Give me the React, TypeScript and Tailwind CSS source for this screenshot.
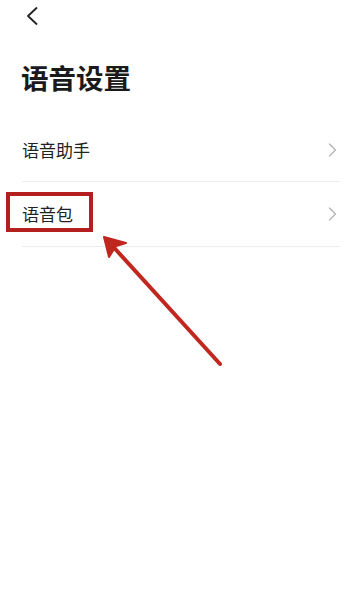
import React from "react";

const Chevron = () => (
  <svg width="9" height="14" viewBox="0 0 9 14" fill="none">
    <path d="M1.5 1 L7.5 7 L1.5 13" stroke="#b5b5b5" strokeWidth="1.3" strokeLinecap="round" strokeLinejoin="round" />
  </svg>
);

export default function App() {
  const font = { fontFamily: '"Noto Sans CJK SC", "Noto Sans", sans-serif' };
  return (
    <div className="relative w-[359px] h-[600px] bg-white overflow-hidden" style={font}>
      <div className="h-[32px] flex items-center pl-[26px]">
        <svg width="12" height="18" viewBox="0 0 12 18" fill="none">
          <path d="M10.5 1 L2 9 L10.5 17" stroke="#222" strokeWidth="1.8" strokeLinecap="round" strokeLinejoin="round" />
        </svg>
      </div>
      <div className="pl-[21px] mt-[26px] text-[27.5px] leading-[38px] font-bold text-[#1a1a1a]">
        语音设置
      </div>
      <div className="mt-[22px] pl-[22px] pr-[19px]">
        <div className="h-[64px] flex items-center justify-between border-b border-[#ececec]">
          <span className="text-[17px] text-[#222]">语音助手</span>
          <div className="pr-[3px]"><Chevron /></div>
        </div>
        <div className="h-[65px] flex items-center justify-between border-b border-[#ececec]">
          <span className="text-[17px] text-[#222]">语音包</span>
          <div className="pr-[3px]"><Chevron /></div>
        </div>
      </div>
      <div className="absolute left-[6px] top-[192px] w-[87px] h-[40px] border-[4px] border-[#b3201e]" />
      <svg className="absolute left-0 top-0" width="359" height="600" viewBox="0 0 359 600" fill="none">
        <line x1="220" y1="364" x2="108" y2="241" stroke="#c0271f" strokeWidth="4" strokeLinecap="round" />
        <path d="M104 237 L126 243 L116 246 L109 257 Z" fill="#c0271f" stroke="#c0271f" strokeWidth="2" strokeLinejoin="round" />
      </svg>
    </div>
  );
}
